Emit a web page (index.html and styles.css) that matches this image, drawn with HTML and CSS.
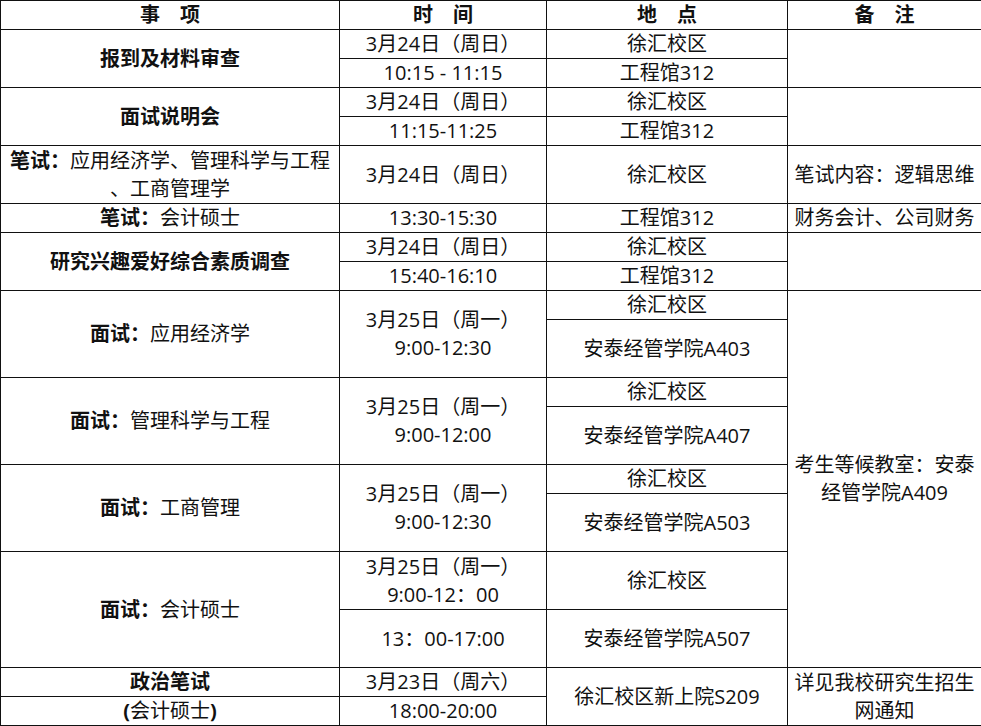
FILE: index.html
```html
<!DOCTYPE html>
<html lang="zh-CN">
<head>
<meta charset="utf-8">
<title>日程安排</title>
<link rel="stylesheet" href="styles.css">
</head>
<body>
<table class="sched">
  <colgroup>
    <col class="c1"><col class="c2"><col class="c3"><col class="c4">
  </colgroup>
  <thead>
    <tr><th>事　项</th><th>时　间</th><th>地　点</th><th>备　注</th></tr>
  </thead>
  <tbody>
    <tr><td rowspan="2" class="b">报到及材料审查</td><td>3月24日（周日）</td><td>徐汇校区</td><td rowspan="2"></td></tr>
    <tr><td>10:15 - 11:15</td><td>工程馆312</td></tr>

    <tr><td rowspan="2" class="b">面试说明会</td><td>3月24日（周日）</td><td>徐汇校区</td><td rowspan="2"></td></tr>
    <tr><td>11:15-11:25</td><td>工程馆312</td></tr>

    <tr><td rowspan="2"><b>笔试：</b>应用经济学、管理科学与工程<br>、工商管理学</td><td rowspan="2">3月24日（周日）</td><td rowspan="2">徐汇校区</td><td rowspan="2">笔试内容：逻辑思维</td></tr>
    <tr></tr>

    <tr><td><b>笔试：</b>会计硕士</td><td>13:30-15:30</td><td>工程馆312</td><td>财务会计、公司财务</td></tr>

    <tr><td rowspan="2" class="b">研究兴趣爱好综合素质调查</td><td>3月24日（周日）</td><td>徐汇校区</td><td rowspan="2"></td></tr>
    <tr><td>15:40-16:10</td><td>工程馆312</td></tr>

    <tr><td rowspan="3"><b>面试：</b>应用经济学</td><td rowspan="3">3月25日（周一）<br>9:00-12:30</td><td>徐汇校区</td><td rowspan="13" class="note">考生等候教室：安泰经管学院A409</td></tr>
    <tr><td rowspan="2">安泰经管学院A403</td></tr>
    <tr></tr>

    <tr><td rowspan="3"><b>面试：</b>管理科学与工程</td><td rowspan="3">3月25日（周一）<br>9:00-12:00</td><td>徐汇校区</td></tr>
    <tr><td rowspan="2">安泰经管学院A407</td></tr>
    <tr></tr>

    <tr><td rowspan="3"><b>面试：</b>工商管理</td><td rowspan="3">3月25日（周一）<br>9:00-12:30</td><td>徐汇校区</td></tr>
    <tr><td rowspan="2">安泰经管学院A503</td></tr>
    <tr></tr>

    <tr><td rowspan="4"><b>面试：</b>会计硕士</td><td rowspan="2">3月25日（周一）<br>9:00-12：00</td><td rowspan="2">徐汇校区</td></tr>
    <tr></tr>
    <tr><td rowspan="2">13：00-17:00</td><td rowspan="2">安泰经管学院A507</td></tr>
    <tr></tr>

    <tr><td class="b">政治笔试</td><td>3月23日（周六）</td><td rowspan="2">徐汇校区新上院S209</td><td rowspan="2">详见我校研究生招生网通知</td></tr>
    <tr><td><b>(</b>会计硕士<b>)</b></td><td>18:00-20:00</td></tr>
  </tbody>
</table>
</body>
</html>
```

FILE: styles.css
```css
html, body {
  margin: 0;
  padding: 0;
  background: #fff;
}

.sched {
  width: 981px;
  table-layout: fixed;
  border-collapse: collapse;
  font-family: "Open Sans", "Noto Sans CJK SC", sans-serif;
  font-size: 20px;
  color: #111;
}

.c1 { width: 339px; }
.c2 { width: 207px; }
.c3 { width: 241px; }
.c4 { width: 194px; }

.sched tr {
  height: 29px;
}

.sched th,
.sched td {
  border: 1px solid #111;
  padding: 0 4px;
  line-height: 28px;
  text-align: center;
  vertical-align: middle;
  white-space: normal;
}

.sched th {
  font-weight: 700;
}

.sched b,
.sched .b {
  font-weight: 700;
}

.note {
  padding: 0 6px;
}
```
